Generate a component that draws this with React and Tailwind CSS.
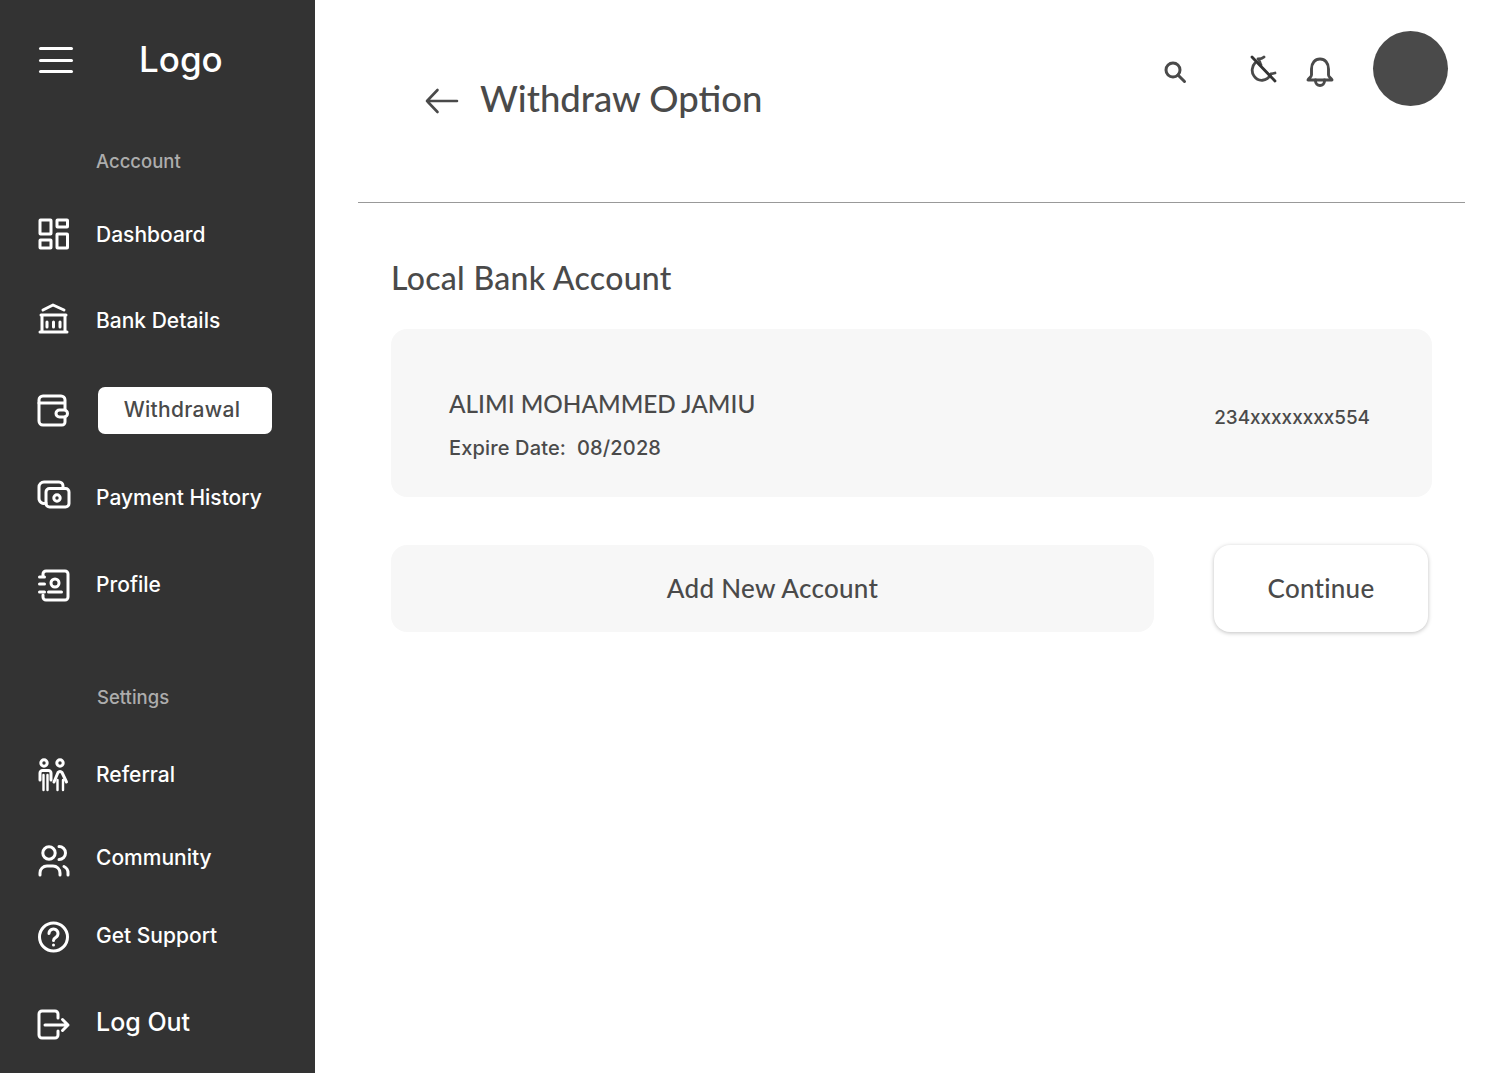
import React from "react";

const poppins = "font-['Inter',sans-serif]";
const raleway = "font-['Lato',sans-serif]";

const Icon = ({ children }) => (
  <svg
    viewBox="0 0 32 32"
    fill="none"
    stroke="currentColor"
    strokeWidth="3"
    strokeLinecap="round"
    strokeLinejoin="round"
    className="h-8 w-8 shrink-0 overflow-visible text-white"
  >
    {children}
  </svg>
);

const DashboardIcon = () => (
  <Icon>
    <rect x="2" y="2" width="11" height="14" rx="0.500" />
    <rect x="19" y="2" width="10.500" height="7" rx="0.500" />
    <rect x="2" y="22" width="11" height="8" rx="0.500" />
    <rect x="19" y="16" width="10.500" height="14" rx="0.500" />
  </Icon>
);

const BankIcon = () => (
  <Icon>
    <path d="M5 6 15 1l11 5" />
    <path d="M3 11h25M4 11v17M27 11v17M2 28h27" />
    <path d="M9 18v5M15.500 18v5M22 18v5" />
  </Icon>
);

const WalletIcon = () => (
  <Icon>
    <path d="M27 15V6a4 4 0 0 0-4-4H5a4 4 0 0 0-4 4v21a4 4 0 0 0 4 4h19a3 3 0 0 0 3-3v-5" />
    <path d="M1 9h25" />
    <rect x="18" y="16" width="11.500" height="7" rx="3.500" />
  </Icon>
);

const PaymentIcon = () => (
  <Icon>
    <path d="M25 7V5a4 4 0 0 0-4-4H6a5 5 0 0 0-5 5v11a5 5 0 0 0 7 5" />
    <rect x="8" y="7.500" width="23" height="18.500" rx="3.500" />
    <circle cx="19" cy="17" r="3.200" />
  </Icon>
);

const ProfileIcon = () => (
  <Icon>
    <path d="M5 8V6a3 3 0 0 1 3-3h19a3 3 0 0 1 3 3v23a3 3 0 0 1-3 3H8a3 3 0 0 1-3-3v-2" />
    <path d="M1.500 9h5M1.500 16h5M1.500 24h5" />
    <circle cx="17" cy="15" r="4" />
    <path d="M10.500 24h13" />
  </Icon>
);

const ReferralIcon = () => (
  <Icon>
    <circle cx="6" cy="5" r="3.200" />
    <circle cx="22" cy="5" r="3.200" />
    <path d="M2 22v-7a2.500 2.500 0 0 1 2.500-2.500h6a2.500 2.500 0 0 1 2.500 2.500v7" />
    <path d="M5.500 17v15M9.500 17v15" strokeWidth="2.400" />
    <path d="M16 24l4-9.500a2.500 2.500 0 0 1 4 0l4.500 9.500" />
    <path d="M19.500 22v10M25 22v10" strokeWidth="2.400" />
  </Icon>
);

const CommunityIcon = () => (
  <Icon>
    <circle cx="11" cy="12" r="6.200" />
    <path d="M21 5.500a6.500 6.500 0 0 1 0 13" />
    <path d="M2 34v-2a7 7 0 0 1 7-7h6a7 7 0 0 1 7 7v2" />
    <path d="M26 25.500a7 7 0 0 1 4 6.500v2" />
  </Icon>
);

const SupportIcon = () => (
  <Icon>
    <circle cx="15.500" cy="18" r="14" />
    <path d="M11 14.500a4.500 4.500 0 1 1 6.800 3.900c-1.600.9-2.300 1.700-2.300 3.100" />
    <path d="M15.500 26v.1" />
  </Icon>
);

const LogoutIcon = () => (
  <Icon>
    <path d="M20 12V8a3 3 0 0 0-3-3H4a3 3 0 0 0-3 3v21a3 3 0 0 0 3 3h13a3 3 0 0 0 3-3v-4" />
    <path d="M7 19h23M24.500 13.500 30 19l-5.500 5.500" />
  </Icon>
);

const NavItem = ({ icon, label, className }) => (
  <div className={`flex h-10 items-center gap-[26px] pl-[38px] ${className}`}>
    {icon}
    <span className={`${poppins} pt-[2px] text-[21px] font-medium text-white`}>{label}</span>
  </div>
);

const SectionLabel = ({ children, className }) => (
  <p className={`${poppins} h-6 pt-[1px] text-[18.500px] font-medium leading-6 text-[#adadad] ${className}`}>
    {children}
  </p>
);

const Sidebar = () => (
  <aside className="flex min-h-[1073px] w-[315px] shrink-0 flex-col bg-[#333333] pt-10">
    <div className="flex h-10 items-center pl-[39px]">
      <div className="flex h-[26px] w-[34px] flex-col justify-between">
        <span className="h-[3px] rounded-full bg-white" />
        <span className="h-[3px] rounded-full bg-white" />
        <span className="h-[3px] rounded-full bg-white" />
      </div>
      <span className={`${poppins} ml-[66px] pb-[2px] text-[35px] font-medium text-white`}>Logo</span>
    </div>

    <SectionLabel className="mt-[68px] pl-[96px]">Acccount</SectionLabel>
    <NavItem className="mt-[42px]" icon={<DashboardIcon />} label="Dashboard" />
    <NavItem className="mt-[46px]" icon={<BankIcon />} label="Bank Details" />

    <div className="mt-[50px] flex h-10 items-center gap-[28px] pl-[38px]">
      <WalletIcon />
      <div className={`${poppins} flex h-[47px] w-[174px] items-center justify-center rounded-[7px] bg-white pr-[6px] text-[21px] font-medium tracking-[0.3px] text-[#4a4a4a]`}>
        Withdrawal
      </div>
    </div>

    <NavItem className="mt-[47px]" icon={<PaymentIcon />} label="Payment History" />
    <NavItem className="mt-[47px]" icon={<ProfileIcon />} label="Profile" />

    <SectionLabel className="mt-[80px] pl-[97px]">Settings</SectionLabel>
    <NavItem className="mt-[46px]" icon={<ReferralIcon />} label="Referral" />
    <NavItem className="mt-[43px]" icon={<CommunityIcon />} label="Community" />
    <NavItem className="mt-[38px]" icon={<SupportIcon />} label="Get Support" />

    <div className="mt-[47px] flex h-10 items-center gap-[26px] pl-[38px]">
      <LogoutIcon />
      <span className={`${poppins} pt-[2px] text-[25px] font-medium text-white`}>Log Out</span>
    </div>
  </aside>
);

const TopIcons = () => (
  <div className="flex items-start pt-[31px]">
    <svg viewBox="0 0 24 24" fill="none" stroke="#4a4a4a" strokeWidth="3" strokeLinecap="round" className="mt-[29px] h-6 w-6 -translate-x-[1px]">
      <circle cx="10" cy="10" r="7" />
      <path d="M15 15l6.500 6.500" />
    </svg>
    <svg viewBox="0 0 32 32" fill="none" stroke="#4a4a4a" strokeWidth="2.800" strokeLinecap="round" strokeLinejoin="round" className="ml-[58px] mt-[23px] h-8 w-8">
      <path d="M9 9c-3 3-4 9-1 13 4 6 13 6 17-2" />
      <path d="M12 5c3 3 1 3 3 6M12 5c3 0 5-1 6-2M25 20l4-1" />
      <path d="M6 3l23 24" stroke="#333333" />
    </svg>
    <svg viewBox="0 0 28 32" fill="none" stroke="#4a4a4a" strokeWidth="2.900" strokeLinecap="round" strokeLinejoin="round" className="ml-[28px] mt-[26px] h-8 w-7">
      <path d="M14 2c-5 0-8.500 4-8.500 10v6c0 2-2.500 3-3.500 5h24c-1-2-3.500-3-3.500-5v-6C22.500 6 19 2 14 2z" />
      <path d="M9.500 23v1a4.500 4.500 0 0 0 9 0v-1" />
    </svg>
    <div className="ml-[39px] h-[75px] w-[75px] rounded-full bg-[#4a4a4a]" />
  </div>
);

const Main = () => (
  <main className="flex-1 pl-[43px] pr-[47px]">
    <header className="flex h-[203px] justify-between border-b border-[#999999] pr-[17px]">
      <div className="flex items-start gap-[21px] self-start pl-[67px] pt-[74px]">
        <svg viewBox="0 0 34 26" fill="none" stroke="#4a4a4a" strokeWidth="2.600" strokeLinecap="round" strokeLinejoin="round" className="mt-[14px] h-[26px] w-[34px]">
          <path d="M32 13H2M12.500 2 2 13l10.500 11" />
        </svg>
        <h1 className={`${raleway} text-[36.500px] font-medium leading-[48px] text-[#4a4a4a]`}>
          Withdraw Option
        </h1>
      </div>
      <TopIcons />
    </header>

    <section className="px-[33px]">
      <h2 className={`${raleway} mt-[55px] text-[32px] font-medium leading-[40px] tracking-[0.3px] text-[#4a4a4a]`}>
        Local Bank Account
      </h2>

      <div className="mt-[31px] flex h-[168px] items-center justify-between rounded-2xl bg-[#f7f7f7] pl-[58px] pr-[62px]">
        <div className="flex flex-col gap-[14px] pt-[24px]">
          <p className={`${raleway} text-[24.300px] font-medium leading-8 text-[#4a4a4a]`}>
            ALIMI MOHAMMED JAMIU
          </p>
          <p className={`${poppins} text-[20px] font-medium leading-7 tracking-[0.15px] text-[#4a4a4a]`}>
            Expire Date:&nbsp; 08/2028
          </p>
        </div>
        <p className={`${poppins} pt-[10px] text-[18.900px] font-medium text-[#4a4a4a]`}>234xxxxxxxx554</p>
      </div>

      <div className="mt-[48px] flex gap-[60px]">
        <button className={`${raleway} h-[87px] w-[763px] rounded-2xl bg-[#f7f7f7] text-[26px] font-medium tracking-[0.3px] text-[#4a4a4a]`}>
          Add New Account
        </button>
        <button className={`${raleway} h-[87px] w-[214px] rounded-2xl bg-white text-[26px] font-medium tracking-[0.25px] text-[#4a4a4a] shadow-[0_1px_4px_rgba(0,0,0,0.25)]`}>
          Continue
        </button>
      </div>
    </section>
  </main>
);

export default function App() {
  return (
    <div className="flex min-h-[1073px] bg-white">
      <Sidebar />
      <Main />
    </div>
  );
}
